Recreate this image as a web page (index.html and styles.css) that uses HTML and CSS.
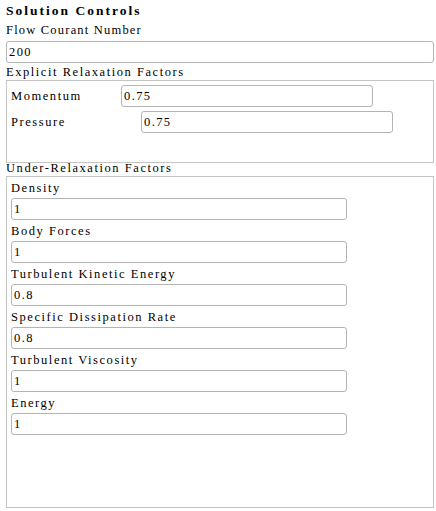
FILE: index.html
```html
<!DOCTYPE html>
<html>
<head>
<meta charset="utf-8">
<link rel="stylesheet" href="styles.css">
</head>
<body>
<div class="panel">
  <div class="title">Solution Controls</div>
  <div class="label top-label">Flow Courant Number</div>
  <input class="field full" type="text" value="200">

  <div class="section-label first-section">Explicit Relaxation Factors</div>
  <div class="box explicit">
    <div class="row">
      <span class="row-label w-momentum">Momentum</span>
      <input class="field row-field" type="text" value="0.75">
    </div>
    <div class="row">
      <span class="row-label w-pressure">Pressure</span>
      <input class="field row-field" type="text" value="0.75">
    </div>
  </div>

  <div class="section-label">Under-Relaxation Factors</div>
  <div class="box under">
    <div class="label item-label">Density</div>
    <input class="field item-field" type="text" value="1">
    <div class="label item-label">Body Forces</div>
    <input class="field item-field" type="text" value="1">
    <div class="label item-label">Turbulent Kinetic Energy</div>
    <input class="field item-field" type="text" value="0.8">
    <div class="label item-label">Specific Dissipation Rate</div>
    <input class="field item-field" type="text" value="0.8">
    <div class="label item-label">Turbulent Viscosity</div>
    <input class="field item-field" type="text" value="1">
    <div class="label item-label">Energy</div>
    <input class="field item-field" type="text" value="1">
  </div>
</div>
</body>
</html>
```
FILE: styles.css
```css
html, body {
  margin: 0;
  padding: 0;
  background: #ffffff;
}
body {
  font-family: "Liberation Serif", "Times New Roman", serif;
  font-size: 12.5px;
  color: #000;
  letter-spacing: 1.55px;
}
.panel {
  display: flex;
  flex-direction: column;
  align-items: flex-start;
  padding: 1px 2px 0 6px;
  width: 436px;
  box-sizing: border-box;
}
.title {
  font-weight: bold;
  font-size: 13.5px;
  line-height: 20px;
  padding-bottom: 1px;
  letter-spacing: 2px;
  color: #000;
}
.label {
  line-height: 17px;
}
.top-label {
  padding-bottom: 2px;
  letter-spacing: 1.2px;
}
.field {
  box-sizing: border-box;
  height: 22px;
  margin: 0;
  padding: 0 2px;
  border: 1px solid #b4b4b4;
  border-radius: 3px;
  background: #fff;
  font-family: "Liberation Serif", "Times New Roman", serif;
  font-size: 12.5px;
  letter-spacing: 1.4px;
  color: #000;
  outline: none;
}
.full {
  width: 428px;
}
.section-label {
  line-height: 11px;
  padding-bottom: 2px;
}
.first-section {
  margin-top: 4px;
}
.box {
  box-sizing: border-box;
  width: 428px;
  border: 1px solid #c4c4c4;
  display: flex;
  flex-direction: column;
  align-items: flex-start;
  padding-left: 4px;
}
.explicit {
  height: 83px;
  padding-top: 4px;
  gap: 4px;
}
.row {
  display: flex;
  align-items: center;
}
.row-label {
  line-height: 22px;
}
.w-momentum {
  width: 110px;
}
.w-pressure {
  width: 130px;
}
.row-field {
  width: 252px;
}
.under {
  height: 332px;
}
.item-label {
  margin-top: 3px;
  padding-bottom: 1px;
}
.item-field {
  width: 336px;
}
```
